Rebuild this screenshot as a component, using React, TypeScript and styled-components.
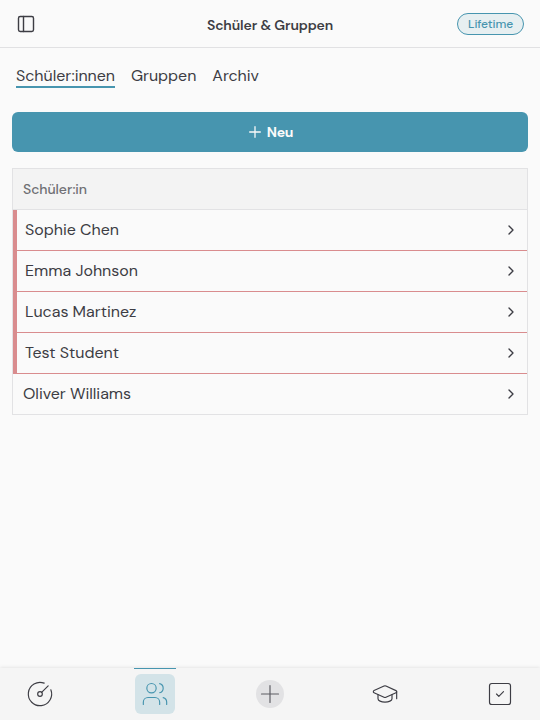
import React from 'react';
import styled, { createGlobalStyle, css } from 'styled-components';

const GlobalStyle = createGlobalStyle`
  *, *::before, *::after { box-sizing: border-box; }
  body {
    margin: 0;
    background: #fafafa;
    color: #3d3d44;
    font-family: 'DM Sans', Inter, sans-serif;
  }
  button { font: inherit; color: inherit; border: 0; padding: 0; background: none; }
`;

const Screen = styled.div`
  display: flex;
  flex-direction: column;
  height: 100vh;
  overflow: hidden;
`;

const Header = styled.header`
  display: grid;
  grid-template-columns: 1fr auto 1fr;
  align-items: center;
  flex: none;
  height: 48px;
  padding: 0 16px;
  border-bottom: 1px solid #e1e1e3;
`;

const SidebarToggle = styled.button`
  display: flex;
  justify-self: start;
`;

const Title = styled.h1`
  margin: 3px 0 0;
  font-size: 14px;
  line-height: 20px;
  font-weight: 600;
  letter-spacing: -0.12px;
`;

const PlanBadge = styled.span`
  justify-self: end;
  height: 22px;
  padding: 0 10px;
  border: 1px solid #4795af;
  border-radius: 11px;
  background: #e7eff1;
  color: #4795af;
  font-size: 12px;
  line-height: 20px;
  font-weight: 500;
  letter-spacing: -0.12px;
`;

const Main = styled.main`
  flex: 1;
  padding: 16px 12px;
`;

const Tabs = styled.nav`
  display: flex;
  gap: 16px;
  padding: 0 4px;
  margin-bottom: 24px;
`;

const Tab = styled.button<{ $active?: boolean }>`
  height: 24px;
  border-bottom: 2px solid ${p => (p.$active ? '#4795af' : 'transparent')};
  font-size: 16px;
  line-height: 24px;
  letter-spacing: -0.03px;
`;

const NewButton = styled.button`
  display: flex;
  align-items: center;
  justify-content: center;
  gap: 4px;
  width: 100%;
  height: 40px;
  margin-bottom: 16px;
  border-radius: 6px;
  background: #4795af;
  color: #fafafa;
  font-size: 14px;
  font-weight: 700;
  letter-spacing: -0.3px;
`;

const List = styled.section`
  border: 1px solid #e2e2e4;
`;

const ListHeader = styled.div`
  height: 41px;
  padding: 0 10px;
  border-bottom: 1px solid #e2e2e4;
  background: #f3f3f3;
  color: #6f6f74;
  font-size: 14px;
  line-height: 40px;
  font-weight: 500;
  letter-spacing: -0.06px;
`;

const flagged = css`
  height: 41px;
  padding-left: 8px;
  background: linear-gradient(#d98c8e, #d98c8e) bottom / 100% 1px no-repeat;
  border-left: 4px solid #d98c8e;
  padding-bottom: 1px;
`;

const StudentRow = styled.div<{ $flagged: boolean }>`
  display: flex;
  align-items: center;
  justify-content: space-between;
  height: 40px;
  padding: 0 8px 0 10px;
  font-size: 16px;
  ${p => p.$flagged && flagged}
`;

const StudentName = styled.span`
  line-height: 20px;
  letter-spacing: -0.02px;
`;

const BottomNav = styled.nav`
  display: flex;
  justify-content: space-between;
  flex: none;
  height: 52px;
  padding: 6px 20px;
  background: #f5f5f5;
  box-shadow: 0 0 4px rgba(0, 0, 0, 0.13);
`;

const NavItem = styled.button<{ $active?: boolean }>`
  position: relative;
  display: flex;
  align-items: center;
  justify-content: center;
  width: 40px;
  height: 40px;
  border-radius: 6px;
  color: ${p => (p.$active ? '#4795af' : '#3d3d44')};
  background: ${p => (p.$active ? '#d3e3e8' : 'transparent')};
`;

const ActiveMark = styled.span`
  position: absolute;
  top: -6px;
  left: -1px;
  right: -1px;
  height: 1px;
  background: #4795af;
`;

const AddCircle = styled.span`
  display: flex;
  border-radius: 50%;
  background: #e2e2e4;
  color: #5c5c62;
`;

const IconSvg = styled.svg`
  display: block;
  flex: none;
  fill: none;
  stroke: currentColor;
  stroke-linecap: round;
  stroke-linejoin: round;
`;

type IconProps = { size?: number; weight?: number; children: React.ReactNode };

function Icon({ size = 28, weight = 1, children }: IconProps) {
  return (
    <IconSvg width={size} height={size} viewBox="0 0 24 24" strokeWidth={weight} aria-hidden="true">
      {children}
    </IconSvg>
  );
}

const students = [
  { name: 'Sophie Chen', flagged: true },
  { name: 'Emma Johnson', flagged: true },
  { name: 'Lucas Martinez', flagged: true },
  { name: 'Test Student', flagged: true },
  { name: 'Oliver Williams', flagged: false },
];

export default function App() {
  return (
    <Screen>
      <GlobalStyle />
      <Header>
        <SidebarToggle aria-label="Menü">
          <Icon size={20} weight={1.7}>
            <rect x="3" y="3" width="18" height="18" rx="2" />
            <path d="M9 3v18" />
          </Icon>
        </SidebarToggle>
        <Title>Schüler &amp; Gruppen</Title>
        <PlanBadge>Lifetime</PlanBadge>
      </Header>

      <Main>
        <Tabs>
          <Tab $active>Schüler:innen</Tab>
          <Tab>Gruppen</Tab>
          <Tab>Archiv</Tab>
        </Tabs>

        <NewButton>
          <Icon size={16} weight={1.9}>
            <path d="M4 12h16M12 4v16" />
          </Icon>
          Neu
        </NewButton>

        <List>
          <ListHeader>Schüler:in</ListHeader>
          {students.map(s => (
            <StudentRow key={s.name} $flagged={s.flagged}>
              <StudentName>{s.name}</StudentName>
              <Icon size={16} weight={2}>
                <path d="m9 18 6-6-6-6" />
              </Icon>
            </StudentRow>
          ))}
        </List>
      </Main>

      <BottomNav>
        <NavItem aria-label="Übersicht">
          <Icon>
            <path d="M15.6 2.7a10 10 0 1 0 5.7 5.7" />
            <circle cx="12" cy="12" r="2" />
            <path d="M13.4 10.6 19 5" />
          </Icon>
        </NavItem>
        <NavItem $active aria-label="Schüler">
          <ActiveMark />
          <Icon>
            <path d="M16 21v-2a4 4 0 0 0-4-4H6a4 4 0 0 0-4 4v2" />
            <circle cx="9" cy="7" r="4" />
            <path d="M22 21v-2a4 4 0 0 0-3-3.87M16 3.13a4 4 0 0 1 0 7.75" />
          </Icon>
        </NavItem>
        <NavItem aria-label="Hinzufügen">
          <AddCircle>
            <Icon weight={1}>
              <path d="M4.7 12h14.6M12 4.7v14.6" />
            </Icon>
          </AddCircle>
        </NavItem>
        <NavItem aria-label="Unterricht">
          <Icon>
            <path d="M21.42 10.922a1 1 0 0 0-.019-1.838L12.83 5.18a2 2 0 0 0-1.66 0L2.6 9.08a1 1 0 0 0 0 1.832l8.57 3.908a2 2 0 0 0 1.66 0z" />
            <path d="M22 10v6M6 12.5V16a6 3 0 0 0 12 0v-3.5" />
          </Icon>
        </NavItem>
        <NavItem aria-label="Aufgaben">
          <Icon>
            <rect x="3" y="3" width="18" height="18" rx="2" />
            <path d="m9 12 2 2 4-4" />
          </Icon>
        </NavItem>
      </BottomNav>
    </Screen>
  );
}
